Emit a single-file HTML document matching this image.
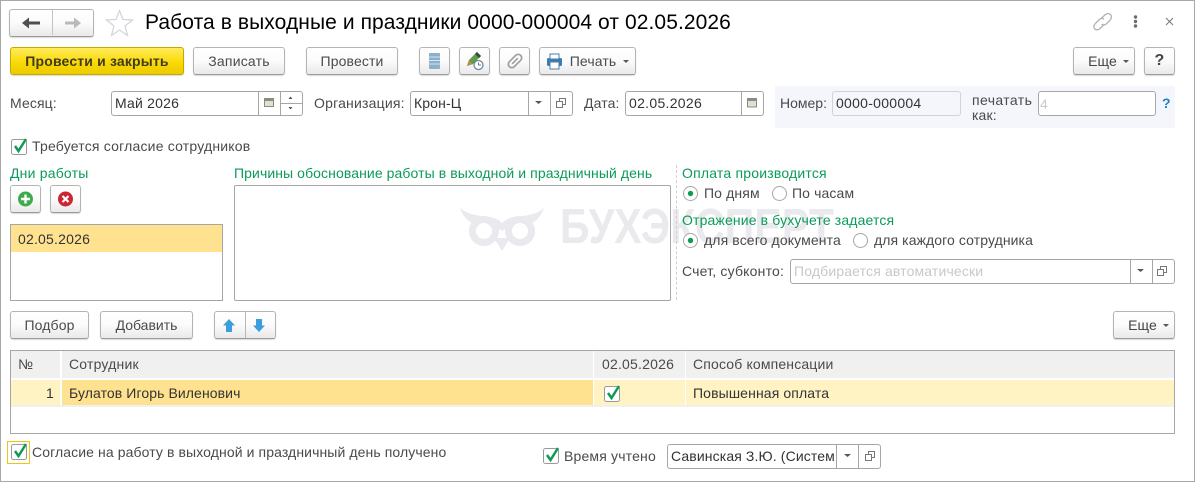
<!DOCTYPE html>
<html lang="ru"><head><meta charset="utf-8"><title>Работа в выходные и праздники</title>
<style>
html,body{margin:0;padding:0;background:#fff}
#p{position:relative;width:1195px;height:482px;overflow:hidden;background:#fff;font-family:"Liberation Sans",sans-serif;font-size:14px;color:#4a4a4a;box-sizing:border-box;letter-spacing:.12px}
#p div,#p svg{position:absolute;box-sizing:border-box}
.t{line-height:16px;height:16px;white-space:nowrap}
.w{letter-spacing:.2px}
.g{color:#0b9b58}
.d{color:#333}
.b{height:28px;border:1px solid #b4b4b4;border-bottom:1px solid #9a9a9a;border-radius:3px;background:linear-gradient(#fff 0%,#fbfbfb 50%,#e9e9e9 100%);box-shadow:0 1px 1px rgba(0,0,0,.15);text-align:center;line-height:26px;color:#4a4a4a;white-space:nowrap}
.f{height:25px;border:1px solid #a6a6a6;border-radius:3px;background:#fff}
.s{width:1px;background:#a6a6a6}
.sep{background:#fff;width:2px}
</style></head><body>
<div id="p">
<div style="left:0;top:0;width:1195px;height:482px;border:1px solid #a8a8a8;z-index:5;pointer-events:none"></div>

<!-- watermark -->
<svg style="left:455px;top:200px;z-index:0" width="395" height="55" viewBox="455 200 395 55">
<path d="M460 208C468 215 480 216 490 217C495 218 499 220 502 223C505 220 509 218 514 217C524 216 536 215 544 208C541 216 537 221 530 224L520 219L502 231L484 219L474 224C467 221 463 216 460 208Z" fill="#e9e9ee"/>
<path d="M494 238L510 238L502 251Z" fill="#e9e9ee"/>
<circle cx="484" cy="231" r="11.500" fill="#fff" stroke="#e9e9ee" stroke-width="7"/>
<circle cx="520" cy="231" r="11.500" fill="#fff" stroke="#e9e9ee" stroke-width="7"/>
<text x="560" y="243" font-family="Liberation Sans" font-weight="700" font-size="49" fill="#e9e9ee" textLength="274" lengthAdjust="spacingAndGlyphs">БУХЭКСПЕРТ</text>
</svg>

<!-- nav -->
<div class="b" style="left:9px;top:9px;width:85px;height:28px"></div>
<div class="s" style="left:52px;top:10px;height:25px;background:#c4c4c4"></div>
<svg style="left:20px;top:15px" width="64" height="16" viewBox="0 0 64 16">
<path d="M4 8H20" stroke="#505050" stroke-width="3"/><path d="M2 8L9 2.500V13.500Z" fill="#505050"/>
<path d="M45 8H58" stroke="#b9b9b9" stroke-width="3"/><path d="M61 8L54 2.500V13.500Z" fill="#b9b9b9"/>
</svg>
<svg style="left:105px;top:9px" width="29" height="28" viewBox="0 0 29 28"><path d="M14.500 1.500L18 10.500L27.500 11L20 17L22.500 26.500L14.500 21L6.500 26.500L9 17L1.500 11L11 10.500Z" fill="#fff" stroke="#d3d6da" stroke-width="1.300"/></svg>
<div class="t" style="left:145px;top:10px;height:26px;line-height:26px;font-size:21px;color:#000;letter-spacing:.085px">Работа в выходные и праздники 0000-000004 от 02.05.2026</div>
<svg style="left:1090px;top:10px" width="85" height="26" viewBox="0 0 85 26">
<g transform="translate(0,1.500) scale(.87)"><path d="M12 9L16 5C18 3 21 3 22.500 4.500C24 6 24 9 22 11L18 15C16 17 14 17 12.500 15.500M15 16L10.500 20.500C8.500 22.500 6 22.500 4.500 21C3 19.500 3 17 5 15L9.500 10.500C11.500 8.500 13.500 8.500 15 10" transform="translate(1,-1)" fill="none" stroke="#b0b0b0" stroke-width="1.500"/></g>
<circle cx="45.500" cy="7" r="1.700" fill="#6d6d6d"/><circle cx="45.500" cy="11.500" r="1.700" fill="#6d6d6d"/><circle cx="45.500" cy="16" r="1.700" fill="#6d6d6d"/>
<path d="M76 8L83 15M83 8L76 15" stroke="#777" stroke-width="1"/>
</svg>

<!-- toolbar -->
<div class="b" style="left:10px;top:47px;width:174px;border-color:#c5a800;background:linear-gradient(#ffec5c,#f9d800 60%,#eccb00);font-weight:700;color:#3f3a20;letter-spacing:.17px">Провести и закрыть</div>
<div class="b" style="left:193px;top:47px;width:92px;letter-spacing:.2px">Записать</div>
<div class="b" style="left:306px;top:47px;width:92px">Провести</div>
<div class="b" style="left:419px;top:47px;width:31px"></div>
<div class="b" style="left:459px;top:47px;width:31px"></div>
<div class="b" style="left:499px;top:47px;width:31px"></div>
<div class="b" style="left:539px;top:47px;width:97px;padding-left:11px">Печать</div>
<div class="b" style="left:1073px;top:47px;width:62px;padding-left:0;padding-right:3px;color:#444">Еще</div>
<div class="b" style="left:1144px;top:47px;width:31px;font-weight:700;font-size:16px;color:#444">?</div>
<svg style="left:419px;top:47px" width="220" height="28" viewBox="419 47 220 28">
<rect x="429" y="53" width="11" height="16" rx="1" fill="#8bb0cc"/><path d="M429 57H440M429 60.500H440M429 64H440" stroke="#d6e3ee" stroke-width="1"/>
<path d="M467 66L469 60L477 52L481 56L473 64Z" fill="#58a04a"/><path d="M475 54L477 52L481 56L479 58Z" fill="#3a4a3a"/><path d="M467 66L469 60L473 64Z" fill="#b98a4a"/>
<circle cx="478.500" cy="65" r="4.500" fill="#fff" stroke="#6d8aa0" stroke-width="1.300"/><path d="M478.500 62.500V65H481" stroke="#555" fill="none" stroke-width=".8"/>
<g transform="rotate(45 515 61)" fill="none" stroke="#a0a0a0" stroke-width="1.700"><rect x="511.500" y="53" width="7" height="16" rx="3.500"/><path d="M515 57V65"/></g>
<rect x="547" y="58" width="15" height="8" rx="1.500" fill="#3f7bb0"/><rect x="550" y="54" width="9" height="5" fill="#fff" stroke="#4d7fa8"/><rect x="550" y="62" width="9" height="7" fill="#fff" stroke="#4d7fa8"/>
<path d="M623 60H629L626 63Z" fill="#555"/>
</svg>
<svg style="left:1123px;top:59px" width="10" height="5"><path d="M0 1H6L3 4Z" fill="#555"/></svg>

<!-- row fields -->
<div class="t" style="left:10px;top:95px">Месяц:</div>
<div class="f" style="left:111px;top:91px;width:192px"></div>
<div class="s" style="left:258px;top:92px;height:23px"></div><div class="s" style="left:280px;top:92px;height:23px"></div>
<div class="t d w" style="left:115px;top:95px">Май 2026</div>
<svg style="left:263px;top:96px" width="36" height="16" viewBox="0 0 36 16">
<rect x="1" y="2" width="10" height="9" fill="#8c8c7c"/><rect x="2" y="5" width="8" height="5" fill="#dfdfd5"/><path d="M25.500 4L27.500 1.500L29.500 4M25.500 12L27.500 14.500L29.500 12" transform="translate(0,-1)" fill="#555"/>
</svg>
<div style="left:281px;top:103px;width:21px;height:1px;background:#a6a6a6"></div>
<div class="t w" style="left:314px;top:95px">Организация:</div>
<div class="f" style="left:410px;top:91px;width:163px"></div>
<div class="s" style="left:528px;top:92px;height:23px"></div><div class="s" style="left:550px;top:92px;height:23px"></div>
<div class="t d" style="left:414px;top:95px">Крон-Ц</div>
<div class="t" style="left:584px;top:95px">Дата:</div>
<div class="f" style="left:625px;top:91px;width:139px"></div>
<div class="s" style="left:741px;top:92px;height:23px"></div>
<div class="t d w" style="left:629px;top:95px;letter-spacing:.3px">02.05.2026</div>
<svg style="left:530px;top:92px" width="230" height="23" viewBox="530 92 230 23">
<path d="M535 101H542L538.500 104Z" fill="#555"/>
<rect x="559.500" y="98.500" width="6" height="6" fill="#fff" stroke="#777"/><rect x="556.500" y="101.500" width="6" height="6" fill="#fff" stroke="#777"/>
<rect x="747" y="98" width="10" height="9.500" fill="#8c8c7c"/><rect x="748" y="101" width="8" height="5.500" fill="#dfdfd5"/>
</svg>
<div style="left:775px;top:86px;width:400px;height:42px;background:#f4f6fc"></div>
<div class="t" style="left:780px;top:95px;letter-spacing:0">Номер:</div>
<div class="f" style="left:832px;top:91px;width:129px;background:#f4f6fc;border-color:#cfd2d6"></div>
<div class="t d" style="left:836px;top:95px;letter-spacing:.27px">0000-000004</div>
<div class="t" style="left:972px;top:92px;letter-spacing:.4px">печатать</div>
<div class="t" style="left:972px;top:107px">как:</div>
<div class="f" style="left:1038px;top:91px;width:118px"></div>
<div class="t" style="left:1040px;top:96px;color:#c8c8c8">4</div>
<div class="t" style="left:1162px;top:95px;color:#1f7fc4;font-weight:700">?</div>

<!-- consent -->
<svg style="left:0;top:130px" width="40" height="30" viewBox="0 130 40 30"><rect x="11.500" y="139.500" width="15" height="15" rx="2" fill="#fff" stroke="#9a9a9a"/><path d="M15 146L18.500 151L26 139" fill="none" stroke="#0f9a55" stroke-width="2.500"/></svg>
<div class="t w" style="left:32px;top:138px">Требуется согласие сотрудников</div>

<!-- days -->
<div class="t g w" style="left:10px;top:165px">Дни работы</div>
<div class="b" style="left:10px;top:185px;width:31px"></div>
<div class="b" style="left:50px;top:185px;width:31px"></div>
<svg style="left:10px;top:185px" width="72" height="28" viewBox="10 185 72 28">
<circle cx="25.500" cy="199" r="7.500" fill="#3cab4c"/><path d="M21 199H30M25.500 194.500V203.500" stroke="#fff" stroke-width="2.400"/>
<circle cx="65.500" cy="199" r="7.500" fill="#cc2431"/><path d="M62.500 196L68.500 202M68.500 196L62.500 202" stroke="#fff" stroke-width="2.200"/>
</svg>
<div style="left:10px;top:224px;width:213px;height:77px;border:1px solid #a6a6a6;background:#fff"></div>
<div style="left:11px;top:225px;width:211px;height:27px;background:#ffe28f"></div>
<div class="t d w" style="left:18px;top:231px">02.05.2026</div>

<!-- reasons -->
<div class="t g" style="left:234px;top:165px;letter-spacing:.09px">Причины обоснование работы в выходной и праздничный день</div>
<div style="left:234px;top:185px;width:437px;height:116px;border:1px solid #a6a6a6;border-radius:2px"></div>
<div style="left:676px;top:165px;width:0;height:135px;border-left:1px dashed #cfcfcf"></div>

<!-- right -->
<div class="t g w" style="left:682px;top:165px">Оплата производится</div>
<div class="t" style="left:704px;top:185px">По дням</div>
<div class="t" style="left:792px;top:185px">По часам</div>
<div class="t g" style="left:682px;top:212px;letter-spacing:.14px">Отражение в бухучете задается</div>
<div class="t" style="left:704px;top:232px">для всего документа</div>
<div class="t" style="left:874px;top:232px;letter-spacing:.09px">для каждого сотрудника</div>
<svg style="left:680px;top:184px" width="195" height="66" viewBox="680 184 195 66">
<circle cx="690.500" cy="193.500" r="7" fill="#fff" stroke="#a6a6a6"/><circle cx="690.500" cy="193.500" r="2.700" fill="#0f9a55"/>
<circle cx="779.500" cy="193.500" r="7" fill="#fff" stroke="#a6a6a6"/>
<circle cx="690.500" cy="240.500" r="7" fill="#fff" stroke="#a6a6a6"/><circle cx="690.500" cy="240.500" r="2.700" fill="#0f9a55"/>
<circle cx="860.500" cy="240.500" r="7" fill="#fff" stroke="#a6a6a6"/>
</svg>
<div class="t w" style="left:682px;top:263px">Счет, субконто:</div>
<div class="f" style="left:790px;top:259px;width:385px"></div>
<div class="s" style="left:1130px;top:260px;height:23px"></div><div class="s" style="left:1152px;top:260px;height:23px"></div>
<div class="t" style="left:794px;top:263px;color:#c8c8c8;letter-spacing:.15px">Подбирается автоматически</div>
<svg style="left:1130px;top:260px" width="45" height="23" viewBox="1130 260 45 23">
<path d="M1137 269H1144L1140.500 272Z" fill="#555"/>
<rect x="1160.500" y="266.500" width="6" height="6" fill="#fff" stroke="#777"/><rect x="1157.500" y="269.500" width="6" height="6" fill="#fff" stroke="#777"/>
</svg>

<!-- table toolbar -->
<div class="b" style="left:10px;top:311px;width:79px">Подбор</div>
<div class="b" style="left:100px;top:311px;width:93px;letter-spacing:0">Добавить</div>
<div class="b" style="left:214px;top:311px;width:62px"></div>
<div class="s" style="left:245px;top:312px;height:26px;background:#b8b8b8"></div>
<svg style="left:214px;top:311px" width="62" height="28" viewBox="0 0 62 28">
<path d="M15 8L21 14.500H18V21H12V14.500H9Z" fill="#3a9fdc"/><path d="M45 21L39 14.500H42V8H48V14.500H51Z" fill="#3a9fdc"/>
</svg>
<div class="b" style="left:1113px;top:311px;width:62px;padding-left:0;padding-right:3px;color:#444">Еще</div>
<svg style="left:1163px;top:323px" width="10" height="5"><path d="M0 1H6L3 4Z" fill="#555"/></svg>

<!-- table -->
<div style="left:10px;top:350px;width:1165px;height:84px;border:1px solid #a6a6a6;background:#fff"></div>
<div style="left:11px;top:351px;width:1163px;height:27px;background:#f0f0f0"></div>
<div style="left:11px;top:380px;width:1163px;height:25px;background:#fff3c4"></div>
<div style="left:62px;top:380px;width:532px;height:25px;background:#ffe28f"></div>
<div style="left:11px;top:405px;width:1163px;height:2px;background:#f0f0f0"></div>
<div class="sep" style="left:60px;top:351px;height:54px"></div>
<div class="sep" style="left:593px;top:351px;height:54px;width:1px"></div>
<div class="sep" style="left:685px;top:351px;height:54px;width:1px"></div>
<div class="t" style="left:18px;top:356px">№</div>
<div class="t w" style="left:69px;top:356px">Сотрудник</div>
<div class="t w" style="left:602px;top:356px">02.05.2026</div>
<div class="t" style="left:693px;top:356px;letter-spacing:.16px">Способ компенсации</div>
<div class="t d" style="left:46px;top:385px">1</div>
<div class="t d" style="left:69px;top:385px;letter-spacing:.09px">Булатов Игорь Виленович</div>
<div class="t d" style="left:693px;top:385px">Повышенная оплата</div>
<svg style="left:600px;top:380px" width="30" height="25" viewBox="600 380 30 25"><rect x="604.500" y="386.500" width="15" height="15" rx="2" fill="#fff" stroke="#9a9a9a"/><path d="M608 393L611.500 398L619 386" fill="none" stroke="#0f9a55" stroke-width="2.500"/></svg>

<!-- bottom -->
<div style="left:7px;top:441px;width:23px;height:23px;border:1px solid #f1c40f"></div>
<svg style="left:0;top:436px" width="40" height="30" viewBox="0 436 40 30"><rect x="11.500" y="444.500" width="15" height="15" rx="2" fill="#fff" stroke="#9a9a9a"/><path d="M15 451L18.500 456L26 444" fill="none" stroke="#0f9a55" stroke-width="2.500"/></svg>
<div class="t" style="left:32px;top:444px;letter-spacing:.1px">Согласие на работу в выходной и праздничный день получено</div>
<svg style="left:535px;top:440px" width="30" height="30" viewBox="535 440 30 30"><rect x="543.500" y="448.500" width="15" height="15" rx="2" fill="#fff" stroke="#9a9a9a"/><path d="M547 455L550.500 460L558 448" fill="none" stroke="#0f9a55" stroke-width="2.500"/></svg>
<div class="t" style="left:564px;top:448px;letter-spacing:.17px">Время учтено</div>
<div class="f" style="left:667px;top:444px;width:214px"></div>
<div class="s" style="left:836px;top:445px;height:23px"></div><div class="s" style="left:858px;top:445px;height:23px"></div>
<div class="t d" style="left:671px;top:448px;width:164px;overflow:hidden">Савинская З.Ю. (Систем</div>
<svg style="left:836px;top:445px" width="45" height="23" viewBox="836 445 45 23">
<path d="M844 454H851L847.500 457Z" fill="#555"/>
<rect x="868.500" y="451.500" width="6" height="6" fill="#fff" stroke="#777"/><rect x="865.500" y="454.500" width="6" height="6" fill="#fff" stroke="#777"/>
</svg>
</div>
</body></html>
